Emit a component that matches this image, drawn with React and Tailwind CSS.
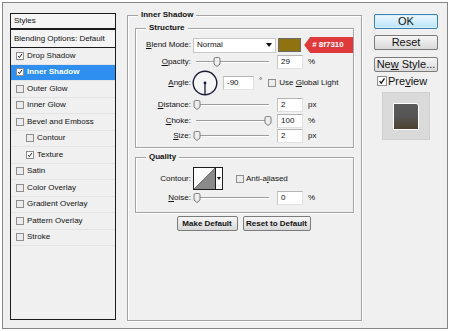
import React from 'react';

const STYLE_ITEMS = [
    { label: 'Drop Shadow', checked: true },
    { label: 'Inner Shadow', checked: true, active: true },
    { label: 'Outer Glow' },
    { label: 'Inner Glow' },
    { label: 'Bevel and Emboss' },
    { label: 'Contour', indent: true },
    { label: 'Texture', checked: true, indent: true },
    { label: 'Satin' },
    { label: 'Color Overlay' },
    { label: 'Gradient Overlay' },
    { label: 'Pattern Overlay' },
    { label: 'Stroke' },
];

function CheckBox({ checked, big }) {
    return (
        <span
            className={`flex items-center justify-center shrink-0 border border-[#8e8e8e] ${
                checked ? 'bg-white' : 'bg-[#ececec]'
            } ${big ? 'w-[10px] h-[10px]' : 'w-[8px] h-[8px]'}`}
        >
            {checked && (
                <svg viewBox="0 0 8 8" className="w-full h-full">
                    <path d="M1.6 4.2 L3.2 6.1 L6.5 1.4" fill="none" stroke="#111" strokeWidth="1.3" />
                </svg>
            )}
        </span>
    );
}

function Slider({ value }) {
    return (
        <div className="relative ml-[5px] w-[73px] h-[14px]">
            <div className="absolute left-0 right-0 top-[6px] h-[2px] border-t border-t-[#9c9c9c] border-b border-b-white" />
            <svg
                viewBox="0 0 8 10"
                className="absolute top-[2px] w-[8px] h-[10px]"
                style={{ left: `${(value / 100) * 73 - 4}px` }}
            >
                <path
                    d="M1 2 Q1 0.5 2.5 0.5 H5.5 Q7 0.5 7 2 V7 L4 9.5 L1 7 Z"
                    fill="#ededed"
                    stroke="#6e6e6e"
                    strokeWidth="0.9"
                />
            </svg>
        </div>
    );
}

function NumBox({ value, w = 'w-[26px]', ml = 'ml-[8px]' }) {
    return (
        <div
            className={`${ml} ${w} h-[14px] bg-white border border-[#e2e2e2] border-t-[#b5b5b5] border-l-[#c4c4c4] pl-[3px] leading-[12px]`}
        >
            {value}
        </div>
    );
}

function Row({ label, className = '', children }) {
    return (
        <div className={`flex items-center ${className}`}>
            <div className="w-[55px] text-right shrink-0">{label}</div>
            {children}
        </div>
    );
}

function Group({ title, className = '', children }) {
    return (
        <div className={`border border-[#a3a3a3] shadow-[inset_1px_1px_0_#fff,1px_1px_0_#fff] ${className}`}>
            <div className="-mt-[6px] ml-[10px] px-[3px] w-fit h-[10px] leading-[10px] font-bold bg-[#f0f0f0]">
                {title}
            </div>
            {children}
        </div>
    );
}

function SideButton({ children, primary, className = '' }) {
    return (
        <div
            className={`w-[64px] h-[15px] rounded-[2px] border flex items-center justify-center text-[11px] leading-none ${
                primary
                    ? 'border-[#3c7fb1] bg-linear-to-b from-[#eef8fd] to-[#b9e3f9] shadow-[inset_0_0_0_1px_#d7f0fc]'
                    : 'border-[#7b7b7b] bg-linear-to-b from-[#f6f6f6] to-[#d9d9d9]'
            } ${className}`}
        >
            {children}
        </div>
    );
}

function PanelButton({ children, className = '' }) {
    return (
        <div
            className={`h-[15px] rounded-[2px] border border-[#7b7b7b] bg-linear-to-b from-[#f6f6f6] to-[#d8d8d8] flex items-center justify-center font-bold ${className}`}
        >
            {children}
        </div>
    );
}

export default function App() {
    return (
        <div className="w-[450px] h-[331px] bg-white p-[2px] text-[8px] text-[#111] [font-family:'Liberation_Sans',Arial,sans-serif]">
            <div className="w-[446px] h-[327px] border border-[#868686] bg-[#f0f0f0] flex pt-[10px] pl-[7px]">
                {/* Styles list */}
                <div className="w-[106px] h-[307px] border border-[#1c1c1c] bg-[#f0f0f0] flex flex-col">
                    <div className="h-[16px] flex items-center pl-[3px] bg-[#f5f5f5] border-b-2 border-[#1c1c1c]">
                        Styles
                    </div>
                    <div className="h-[18px] flex items-center pl-[3px] bg-[#f5f5f5] border-b border-[#1c1c1c]">
                        Blending Options: Default
                    </div>
                    {STYLE_ITEMS.map((item) => (
                        <div
                            key={item.label}
                            className={`h-[16.5px] flex items-center gap-[3px] border-b border-[#e4e4e4] ${
                                item.indent ? 'pl-[15px]' : 'pl-[5px]'
                            } ${item.active ? 'bg-[#2f8ff0] text-white font-bold' : ''}`}
                        >
                            <CheckBox checked={item.checked} />
                            <span>{item.label}</span>
                        </div>
                    ))}
                </div>

                {/* Inner Shadow panel */}
                <Group title="Inner Shadow" className="ml-[11px] mt-[2px] w-[235px] h-[306px]">
                    <Group title="Structure" className="mx-[7px] mt-[8px] w-[219px] pb-[4px]">
                        <Row className="mt-[4px] h-[16px]" label={<><span className="underline">B</span>lend Mode:</>}>
                            <div className="ml-[2px] w-[85px] h-[15px] bg-white border border-[#c8c8c8] flex items-center pl-[3px] pr-[3px]">
                                <span className="flex-1">Normal</span>
                                <svg viewBox="0 0 6 4" className="w-[6px] h-[4px]">
                                    <path d="M0 0 H6 L3 4 Z" fill="#111" />
                                </svg>
                            </div>
                            <div className="ml-[2px] w-[24px] h-[14px] bg-[#8f7310] border border-[#6a6a6a]" />
                            <div className="ml-[3px] w-[50px] h-[16px] bg-[#e0393c] text-white font-bold flex items-center pl-[8px] [clip-path:polygon(6px_0,100%_0,100%_100%,6px_100%,0_50%)]">
                                # 8f7310
                            </div>
                        </Row>
                        <Row className="mt-[1px] h-[15px]" label={<><span className="underline">O</span>pacity:</>}>
                            <Slider value={29} />
                            <NumBox value="29" />
                            <span className="ml-[5px]">%</span>
                        </Row>
                        <Row className="h-[27px]" label={<><span className="underline">A</span>ngle:</>}>
                            <svg viewBox="0 0 26 26" className="ml-[1px] w-[26px] h-[26px]">
                                <circle cx="13" cy="13" r="11.8" fill="#f6f6f6" stroke="#1b1b3a" strokeWidth="1.4" />
                                <line x1="13" y1="13" x2="13" y2="24" stroke="#1b1b3a" strokeWidth="1.3" />
                                <circle cx="13" cy="13" r="1.4" fill="#1b1b3a" />
                            </svg>
                            <NumBox value="-90" w="w-[31px]" ml="ml-[5px]" />
                            <span className="ml-[5px] -mt-[4px]">°</span>
                            <span className="ml-[6px] flex items-center gap-[3px]">
                                <CheckBox />
                                <span>
                                    Use <span className="underline">G</span>lobal Light
                                </span>
                            </span>
                        </Row>
                        <Row className="mt-[1px] h-[15px]" label={<><span className="underline">D</span>istance:</>}>
                            <Slider value={1} />
                            <NumBox value="2" />
                            <span className="ml-[5px]">px</span>
                        </Row>
                        <Row className="mt-[1px] h-[15px]" label={<><span className="underline">C</span>hoke:</>}>
                            <Slider value={99} />
                            <NumBox value="100" />
                            <span className="ml-[5px]">%</span>
                        </Row>
                        <Row className="h-[15px]" label={<><span className="underline">S</span>ize:</>}>
                            <Slider value={1} />
                            <NumBox value="2" />
                            <span className="ml-[5px]">px</span>
                        </Row>
                    </Group>

                    <Group title="Quality" className="mx-[7px] mt-[9px] w-[219px] pb-[7px]">
                        <Row className="mt-[5px] h-[23px]" label="Contour:">
                            <div className="ml-[2px] w-[30px] h-[23px] border border-[#1c1c1c] bg-white flex">
                                <svg viewBox="0 0 21 21" preserveAspectRatio="none" className="w-[21px] h-full">
                                    <path d="M0 21 L21 0 V21 Z" fill="#8a8a8a" />
                                    <path d="M0 21 L21 0" stroke="#555" strokeWidth="0.8" />
                                </svg>
                                <div className="flex-1 border-l border-[#1c1c1c] flex items-center justify-center">
                                    <svg viewBox="0 0 4 3" className="w-[4px] h-[3px]">
                                        <path d="M0 0 H4 L2 3 Z" fill="#111" />
                                    </svg>
                                </div>
                            </div>
                            <span className="ml-[13px] flex items-center gap-[2px]">
                                <CheckBox />
                                <span>
                                    Anti-a<span className="underline">l</span>iased
                                </span>
                            </span>
                        </Row>
                        <Row className="mt-[1px] h-[14px]" label={<><span className="underline">N</span>oise:</>}>
                            <Slider value={1} />
                            <NumBox value="0" />
                            <span className="ml-[5px]">%</span>
                        </Row>
                    </Group>

                    <div className="mt-[3px] flex justify-center gap-[5px] pr-[2px]">
                        <PanelButton className="w-[61px]">Make Default</PanelButton>
                        <PanelButton className="w-[68px]">Reset to Default</PanelButton>
                    </div>
                </Group>

                {/* Buttons + preview */}
                <div className="ml-[12px] w-[64px] flex flex-col">
                    <SideButton primary className="mt-[1px]">
                        OK
                    </SideButton>
                    <SideButton className="mt-[6px]">Reset</SideButton>
                    <SideButton className="mt-[7px]">
                        Ne<span className="underline">w</span>&nbsp;Style...
                    </SideButton>
                    <div className="mt-[3px] h-[12px] ml-[3px] flex items-center gap-[1px] text-[11px]">
                        <CheckBox checked big />
                        <span>
                            Pre<span className="underline">v</span>iew
                        </span>
                    </div>
                    <div className="mt-[5px] ml-[8px] w-[48px] h-[48px] bg-[#dadada] border border-[#cfcfcf] flex items-center justify-center">
                        <div className="w-[26px] h-[27px] border border-white rounded-tr-[3px] bg-linear-to-b from-[#5a5a5a] via-[#555] to-[#4d4230]" />
                    </div>
                </div>
            </div>
        </div>
    );
}
